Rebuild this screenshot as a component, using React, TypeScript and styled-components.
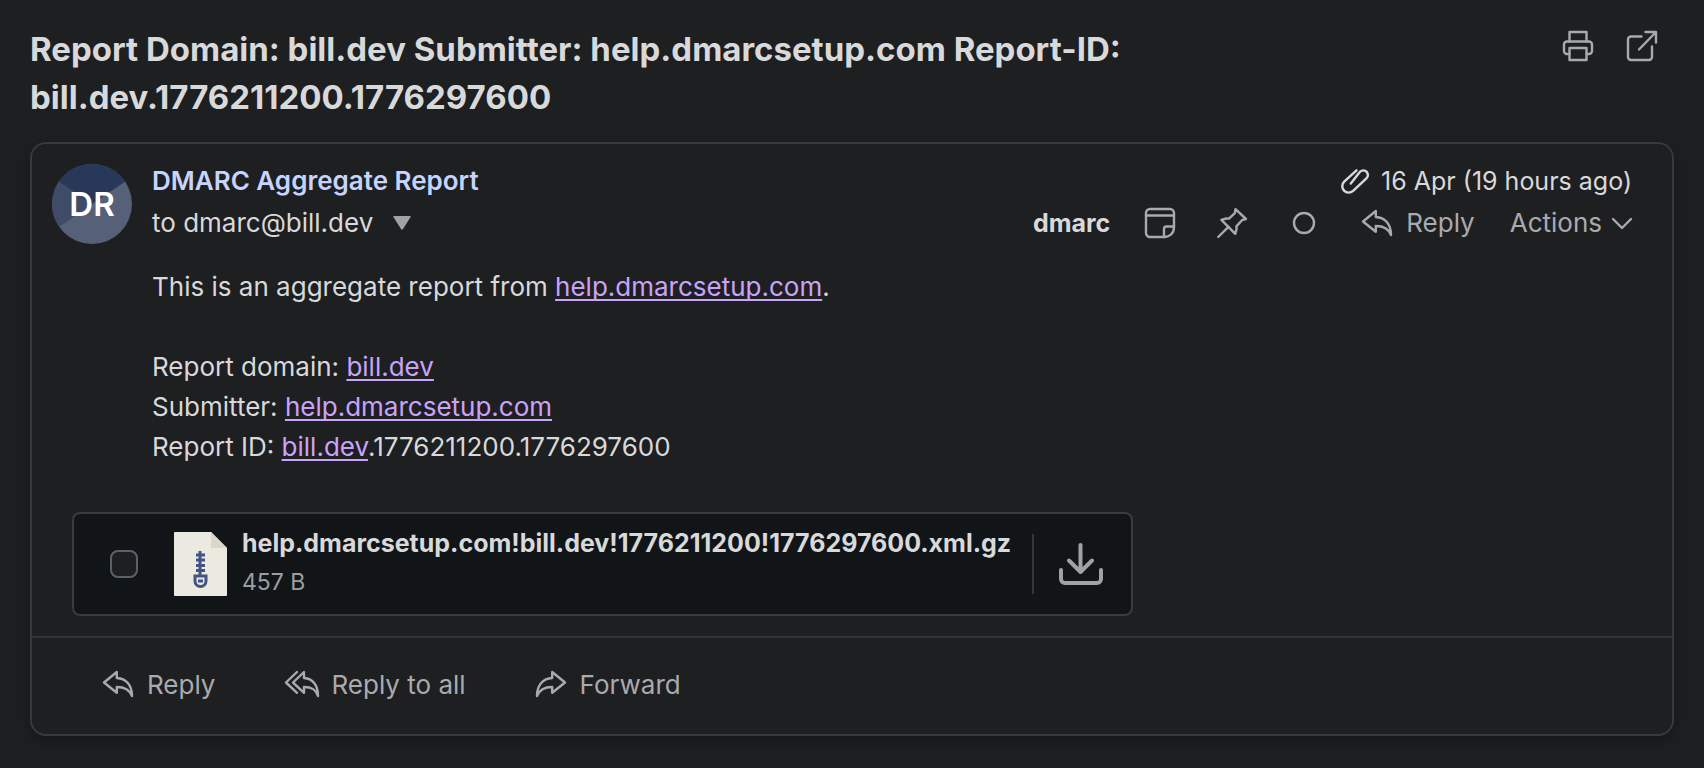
import React from 'react';
import styled, { createGlobalStyle } from 'styled-components';

const color = {
  page: '#1e1f21',
  text: '#d8d9db',
  muted: '#a9aaae',
  border: '#38393b',
  sender: '#c6d4ff',
  link: '#c9a3fb',
};

const GlobalStyle = createGlobalStyle`
  *, *::before, *::after { box-sizing: border-box; }
  body {
    margin: 0;
    background: ${color.page};
    color: ${color.text};
    font-family: Inter, "Liberation Sans", sans-serif;
    font-size: 26px;
  }
`;

const Page = styled.main`
  padding: 25px 30px 32px;
`;

const PageHeader = styled.header`
  display: flex;
  justify-content: space-between;
  align-items: flex-start;
  gap: 48px;
  padding-right: 17px;
`;

const Subject = styled.h1`
  margin: 0;
  font-size: 33px;
  line-height: 48px;
  font-weight: 700;
`;

const PageTools = styled.div`
  display: flex;
  gap: 34px;
  padding-top: 6px;
`;

const PlainButton = styled.button`
  display: inline-flex;
  align-items: center;
  padding: 0;
  border: 0;
  background: none;
  color: ${color.muted};
  font: inherit;
  cursor: pointer;
`;

const LabelButton = styled(PlainButton)<{ $gap?: number }>`
  gap: ${({ $gap = 14 }) => $gap}px;
  white-space: nowrap;
`;

const Icon = styled.svg<{ $stroke?: number }>`
  display: block;
  flex: none;
  overflow: visible;
  fill: none;
  stroke: currentColor;
  stroke-width: ${({ $stroke = 2.4 }) => $stroke};
  stroke-linecap: round;
  stroke-linejoin: round;
`;

const Message = styled.article`
  margin-top: 21px;
  border: 2px solid ${color.border};
  border-radius: 16px;
  box-shadow: 0 4px 16px rgba(0, 0, 0, 0.3);
`;

const MessageHeader = styled.header`
  display: flex;
  gap: 20px;
  padding: 16px 40px 0 20px;
`;

const Avatar = styled.div`
  display: grid;
  flex: none;
  place-items: center;
  width: 80px;
  height: 80px;
  margin-top: 4px;
  border-radius: 50%;
  overflow: hidden;
  color: #fff;
  font-size: 33px;
  font-weight: 600;

  & > * {
    grid-area: 1 / 1;
  }
`;

const HeaderRows = styled.div`
  flex: 1;
  min-width: 0;
`;

const HeaderRow = styled.div`
  display: flex;
  align-items: center;
  justify-content: space-between;
  height: 42px;
  line-height: 42px;
`;

const Sender = styled.span`
  color: ${color.sender};
  font-weight: 600;
`;

const Recipient = styled.span`
  display: flex;
  align-items: center;
  gap: 20px;
`;

const Sent = styled.span`
  display: flex;
  align-items: center;
  gap: 12px;
  font-size: 25px;
`;

const MessageTools = styled.div`
  display: flex;
  align-items: center;
  gap: 35px;
`;

const Mailbox = styled.span`
  font-size: 25px;
  font-weight: 700;
`;

const IconGroup = styled.div`
  display: flex;
  gap: 42px;
  padding-right: 8px;
`;

const Body = styled.div`
  padding: 23px 40px 0 120px;
  line-height: 40px;

  p {
    margin: 0 0 40px;
  }
`;

const Link = styled.a`
  color: ${color.link};
  text-decoration: underline;
  text-decoration-thickness: 2px;
  text-underline-offset: 3px;
  text-decoration-skip-ink: none;
`;

const Attachment = styled.section`
  display: inline-flex;
  align-items: center;
  height: 104px;
  margin: 5px 40px 20px;
  padding: 0 28px 0 36px;
  border: 2px solid #373c40;
  border-radius: 8px;
  background: #111518;
`;

const Checkbox = styled.input`
  appearance: none;
  flex: none;
  width: 28px;
  height: 28px;
  margin: 0 36px 0 0;
  border: 2px solid #59616a;
  border-radius: 8px;
  background: ${color.page};

  &:checked {
    background: ${color.sender};
  }
`;

const FileLabel = styled.label`
  display: flex;
  align-items: center;
  gap: 15px;
`;

const FileText = styled.span`
  display: grid;
  padding-bottom: 4px;
`;

const FileName = styled.span`
  font-size: 25px;
  line-height: 40px;
  font-weight: 700;
`;

const FileSize = styled.span`
  color: #9a9ea2;
  font-size: 23px;
  line-height: 38px;
`;

const Download = styled(PlainButton)`
  height: 60px;
  margin-left: 21px;
  padding-left: 25px;
  border-left: 2px solid #33383c;
  color: #9fa3a6;
`;

const Footer = styled.footer`
  display: flex;
  align-items: center;
  gap: 70px;
  height: 98px;
  padding: 0 71px 4px;
  border-top: 2px solid #2b343a;
`;

const PrintIcon = () => (
  <Icon width="30" height="30" viewBox="0 0 30 30">
    <path d="M6.5 10.5V1h17v9.5" />
    <path d="M6.5 23H4a3 3 0 0 1-3-3v-6.5a3 3 0 0 1 3-3h22a3 3 0 0 1 3 3V20a3 3 0 0 1-3 3h-2.5" />
    <path d="M6.5 17h17v12h-17z" />
  </Icon>
);

const ExternalIcon = () => (
  <Icon width="30" height="30" viewBox="0 0 30 30">
    <path d="M14.5 5.5H4a3 3 0 0 0-3 3V26a3 3 0 0 0 3 3h18a3 3 0 0 0 3-3V15.5" />
    <path d="M12 18.5 29 1M18.5 1H29v10.5" />
  </Icon>
);

const ClipIcon = () => (
  <Icon width="28" height="25" viewBox="0 0 28 25" aria-hidden="true">
    <path d="M15.5 1.3 3.2 12.600a6.300 6.300 0 0 0 8.900 9.200L25.400 9.400a4.600 4.600 0 0 0-6.200-6.800L9.800 14.600" />
  </Icon>
);

const NoteIcon = () => (
  <Icon width="30" height="30" viewBox="0 0 30 30">
    <path d="M19 29H5a4 4 0 0 1-4-4V5a4 4 0 0 1 4-4h20a4 4 0 0 1 4 4v14c0 6-4 10-10 10z" />
    <path d="M1 7.500h28M19 29v-8a2.500 2.500 0 0 1 2.500-2.500H29" />
  </Icon>
);

const PinIcon = () => (
  <Icon width="30" height="30" viewBox="0 0 30 30">
    <path d="M18.5 1.2 29 11l-4 1.2-5.6 6.2.2 2.6-1.3 4.8L4.4 11.9l4.8-1.4 2.8.1 5.8-5.4z" />
    <path d="M11.5 18.8 1.2 29" />
  </Icon>
);

const CircleIcon = () => (
  <Icon width="30" height="30" viewBox="0 0 30 30">
    <circle cx="15" cy="15" r="10" />
  </Icon>
);

const ReplyIcon = () => (
  <Icon width="30" height="26" viewBox="0 0 30 26" aria-hidden="true">
    <path d="M1 11.5 13.8 1v6C23 7.500 29 14 29 25c-2.500-6.500-7-9-15.200-9v5.800z" />
  </Icon>
);

const ReplyAllIcon = () => (
  <Icon width="34" height="26" viewBox="0 0 34 26" aria-hidden="true">
    <path d="M12 1 1 11.500 12 21.800" />
    <path d="M8 11.500 19 1v6c8.500.5 14 7 14 18-2-6.500-6-9-14-9v5.800z" />
  </Icon>
);

const ForwardIcon = () => (
  <Icon width="30" height="26" viewBox="0 0 30 26" aria-hidden="true">
    <path d="M29 11.500 16.200 1v6C7 7.500 1 14 1 25c2.500-6.500 7-9 15.200-9v5.800z" />
  </Icon>
);

const ChevronIcon = () => (
  <Icon width="20" height="13" viewBox="0 0 20 13" aria-hidden="true">
    <path d="m1 2 9 9 9-9" />
  </Icon>
);

const TriangleIcon = () => (
  <svg width="18" height="14" viewBox="0 0 18 14">
    <path d="M1 0h16q1 0 .6 1L10 13q-1 1.500-2 0L.4 1Q0 0 1 0z" fill="#a0a2a5" />
  </svg>
);

const DownloadIcon = () => (
  <Icon $stroke={4} width="44" height="42" viewBox="0 0 44 42">
    <path d="M21.500 2v27M10 17.500l11.500 11.500L33 17.500" />
    <path d="M2 27v9a4 4 0 0 0 4 4h32a4 4 0 0 0 4-4v-9" />
  </Icon>
);

const ArchiveIcon = () => (
  <svg width="53" height="64" viewBox="0 0 53 64" aria-hidden="true">
    <path d="M1 0h36l16 16v47a1 1 0 0 1-1 1H1a1 1 0 0 1-1-1V1a1 1 0 0 1 1-1z" fill="#eaeae0" />
    <path d="M37 0l16 16H37z" fill="#dad8ca" />
    <path d="M26 19v24M22 23h9M22 28h9M22 33.500h9M22 38.500h9" stroke="#445484" strokeWidth="3" fill="none" />
    <path d="M21 44h11v5a5.500 5.500 0 0 1-11 0zM24 49h5" stroke="#445484" strokeWidth="3" fill="none" />
  </svg>
);

const AvatarArt = () => (
  <svg width="80" height="80" viewBox="0 0 80 80" aria-hidden="true">
    <path d="M0 0h80v80H0z" fill="#566179" />
    <path d="M0 13l40 27L0 68z" fill="#3f4b67" />
    <path d="M0 0h80v13L40 40 0 13z" fill="#283858" />
  </svg>
);

export default function App() {
  return (
    <>
      <GlobalStyle />
      <Page>
        <PageHeader>
          <Subject>
            Report Domain: bill.dev Submitter: help.dmarcsetup.com Report-ID:
            {' '}bill.dev.1776211200.1776297600
          </Subject>
          <PageTools>
            <PlainButton aria-label="Print"><PrintIcon /></PlainButton>
            <PlainButton aria-label="Open in new window"><ExternalIcon /></PlainButton>
          </PageTools>
        </PageHeader>

        <Message>
          <MessageHeader>
            <Avatar>
              <AvatarArt />
              <span>DR</span>
            </Avatar>
            <HeaderRows>
              <HeaderRow>
                <Sender>DMARC Aggregate Report</Sender>
                <Sent>
                  <ClipIcon />
                  16 Apr (19 hours ago)
                </Sent>
              </HeaderRow>
              <HeaderRow>
                <Recipient>
                  to dmarc@bill.dev
                  <PlainButton aria-label="Show details"><TriangleIcon /></PlainButton>
                </Recipient>
                <MessageTools>
                  <Mailbox>dmarc</Mailbox>
                  <IconGroup>
                    <PlainButton aria-label="Add note"><NoteIcon /></PlainButton>
                    <PlainButton aria-label="Pin"><PinIcon /></PlainButton>
                    <PlainButton aria-label="Mark as unread"><CircleIcon /></PlainButton>
                  </IconGroup>
                  <LabelButton><ReplyIcon />Reply</LabelButton>
                  <LabelButton $gap={10}>Actions<ChevronIcon /></LabelButton>
                </MessageTools>
              </HeaderRow>
            </HeaderRows>
          </MessageHeader>

          <Body>
            <p>
              This is an aggregate report from <Link href="#">help.dmarcsetup.com</Link>.
            </p>
            <p>
              Report domain: <Link href="#">bill.dev</Link>
              <br />
              Submitter: <Link href="#">help.dmarcsetup.com</Link>
              <br />
              Report ID: <Link href="#">bill.dev</Link>.1776211200.1776297600
            </p>
          </Body>

          <Attachment>
            <Checkbox type="checkbox" id="attachment" />
            <FileLabel htmlFor="attachment">
              <ArchiveIcon />
              <FileText>
                <FileName>help.dmarcsetup.com!bill.dev!1776211200!1776297600.xml.gz</FileName>
                <FileSize>457 B</FileSize>
              </FileText>
            </FileLabel>
            <Download aria-label="Download"><DownloadIcon /></Download>
          </Attachment>

          <Footer>
            <LabelButton><ReplyIcon />Reply</LabelButton>
            <LabelButton $gap={12}><ReplyAllIcon />Reply to all</LabelButton>
            <LabelButton><ForwardIcon />Forward</LabelButton>
          </Footer>
        </Message>
      </Page>
    </>
  );
}
